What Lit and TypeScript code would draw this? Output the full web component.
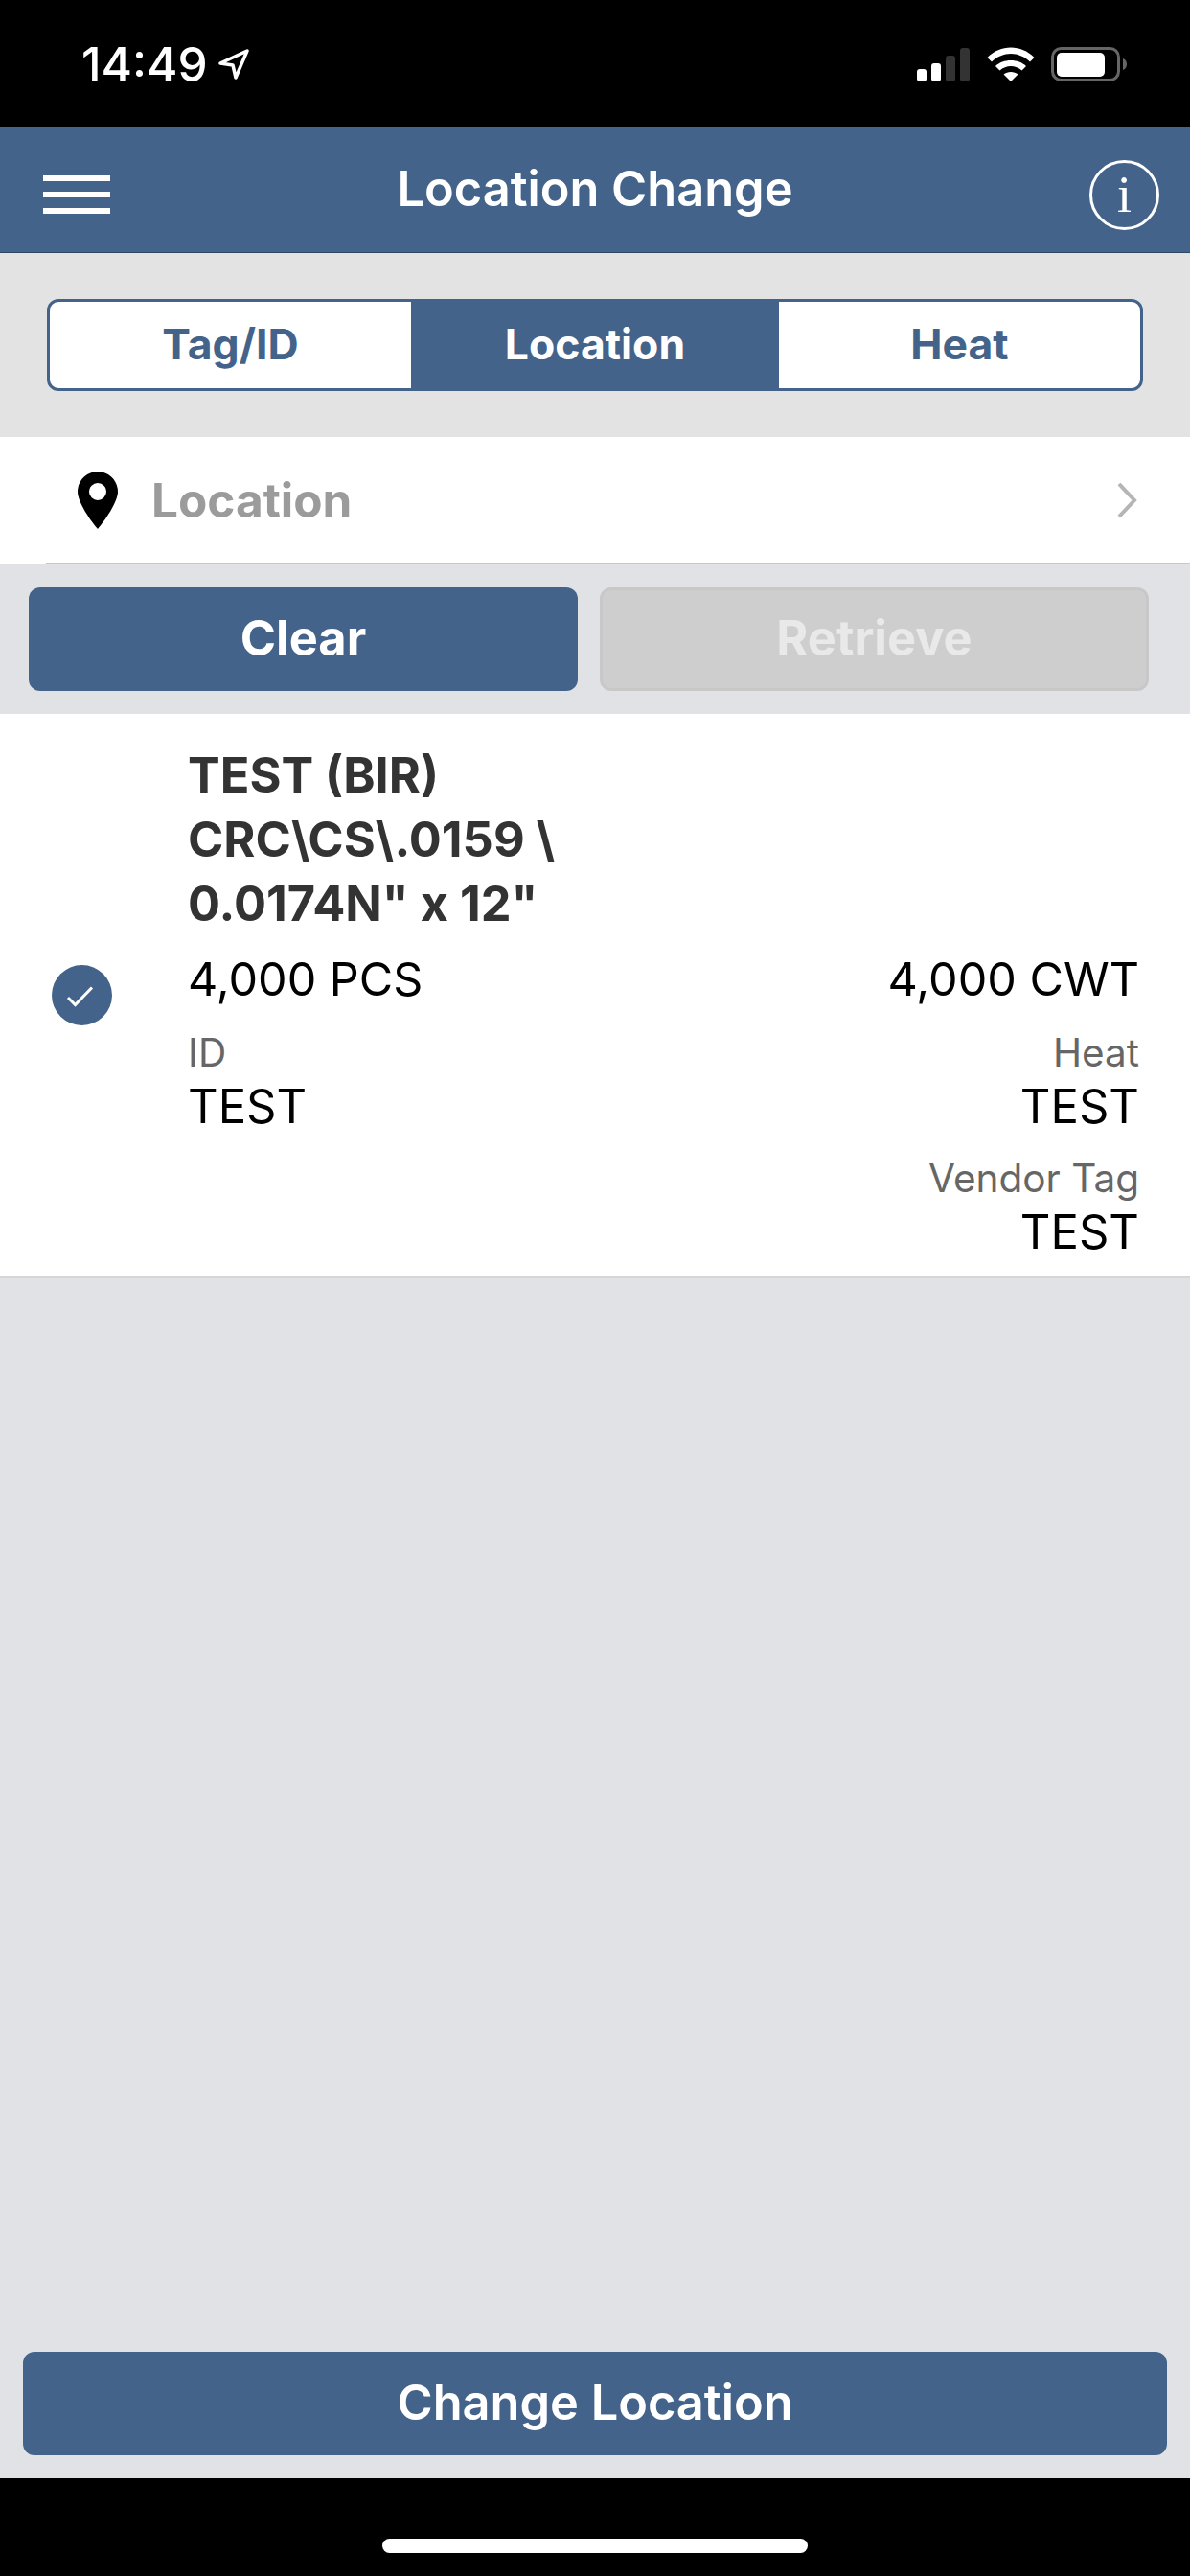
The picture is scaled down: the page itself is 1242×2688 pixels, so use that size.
import { LitElement, html, css } from 'lit';
import { customElement } from 'lit/decorators.js';

@customElement('app-root')
export class AppRoot extends LitElement {
  static styles = css`
    :host {
      display: flex;
      flex-direction: column;
      width: 1242px;
      height: 2688px;
      background: #e1e2e6;
      font-family: Inter, 'Liberation Sans', sans-serif;
      overflow: hidden;
    }

    /* status bar */
    .status {
      box-sizing: border-box;
      height: 132px;
      background: #000;
      color: #fff;
      padding: 49px 65px 0 85px;
      display: flex;
      align-items: flex-start;
      justify-content: space-between;
    }
    .clock {
      display: flex;
      align-items: flex-start;
      gap: 11px;
      font-size: 49.5px;
      font-weight: 500;
      line-height: 36px;
    }
    .clock svg {
      margin-top: 2px;
    }
    .indicators {
      display: flex;
      align-items: flex-start;
      gap: 17px;
    }

    /* header */
    .header {
      box-sizing: border-box;
      height: 132px;
      background: #44638a;
      border-bottom: 1px solid #2f4662;
      color: #fff;
      display: grid;
      grid-template-columns: 1fr auto 1fr;
      align-items: center;
      padding: 0 32px;
    }
    .title {
      font-size: 50.5px;
      font-weight: 600;
      line-height: 60px;
      margin-top: -2px;
    }
    .burger {
      display: flex;
      flex-direction: column;
      gap: 11px;
      width: 70px;
      margin: 11px 0 0 13px;
    }
    .burger span {
      height: 6px;
      background: #fff;
    }
    .info {
      justify-self: end;
      box-sizing: border-box;
      width: 73px;
      height: 73px;
      margin-top: 11px;
      border: 3px solid #fff;
      border-radius: 50%;
      display: flex;
      align-items: center;
      justify-content: center;
      font-family: 'Liberation Serif', serif;
      font-size: 54px;
      line-height: 1;
    }

    /* segmented control */
    .tabs-wrap {
      background: #e3e3e3;
      padding: 48px 49px;
    }
    .tabs {
      box-sizing: border-box;
      height: 96px;
      border: 3px solid #44638a;
      border-radius: 12px;
      overflow: hidden;
      display: grid;
      grid-template-columns: 1fr 384px 1fr;
      background: #fff;
    }
    .tab {
      display: flex;
      align-items: center;
      justify-content: center;
      color: #44638a;
      font-size: 44.5px;
      font-weight: 700;
      padding-bottom: 2px;
    }
    .tab.active {
      background: #44638a;
      color: #fff;
    }

    /* location row */
    .location-row {
      background: #fff;
    }
    .location-inner {
      box-sizing: border-box;
      height: 133px;
      margin-left: 48px;
      padding: 0 55px 0 33px;
      border-bottom: 2px solid #c8c8cc;
      display: flex;
      align-items: center;
      gap: 35px;
    }
    .location-label {
      flex: 1;
      color: #9b9b9b;
      font-size: 49.5px;
      font-weight: 700;
    }

    /* action buttons */
    .actions {
      display: grid;
      grid-template-columns: 573px 573px;
      gap: 23px;
      padding: 24px 43px 24px 30px;
    }
    .btn {
      box-sizing: border-box;
      height: 108px;
      border-radius: 12px;
      background: #44638a;
      color: #fff;
      font-size: 50.5px;
      font-weight: 700;
      padding-bottom: 3px;
      display: flex;
      align-items: center;
      justify-content: center;
    }
    .btn.disabled {
      background: #cecece;
      border: 3px solid #c8c8c8;
      color: #e9e9e9;
    }

    /* result card */
    .card {
      box-sizing: border-box;
      height: 589px;
      background: #fff;
      border-bottom: 2px solid #d6d6d6;
      display: flex;
      padding: 30px 53px 0 54px;
    }
    .check {
      flex: none;
      margin: 232px 79px 0 0;
    }
    .details {
      flex: 1;
    }
    .product {
      color: #333;
      font-size: 50.5px;
      font-weight: 700;
      line-height: 67px;
    }
    .grid {
      display: grid;
      grid-template-columns: 1fr 1fr;
      margin-top: 16px;
      row-gap: 25px;
    }
    .qty {
      color: #000;
      font-size: 48.5px;
      line-height: 60px;
    }
    .right {
      text-align: right;
    }
    .field-label {
      color: #666;
      font-size: 40.5px;
      line-height: 44px;
    }
    .field-value {
      color: #000;
      font-size: 49px;
      line-height: 56px;
      margin-top: 6px;
    }
    .spacer {
      flex: 1;
    }

    /* bottom */
    .footer {
      padding: 0 24px 24px;
    }
    .footer .btn {
      font-size: 50.5px;
      font-weight: 600;
    }
    .home {
      box-sizing: border-box;
      height: 102px;
      background: #000;
      padding-top: 63px;
      display: flex;
      justify-content: center;
    }
    .home span {
      width: 444px;
      height: 15px;
      border-radius: 8px;
      background: #fff;
    }
  `;

  render() {
    return html`
      <div class="status">
        <div class="clock">
          <span>14:49</span>
          <svg width="32" height="32" viewBox="0 0 32 32" fill="none" stroke="#fff" stroke-width="3.5" stroke-linejoin="round">
            <path d="M2 15 L30 2 L18 30 L15 17 Z" />
          </svg>
        </div>
        <div class="indicators">
          <svg width="56" height="36" viewBox="0 0 56 36">
            <rect x="0" y="23" width="10" height="13" rx="3" fill="#fff" />
            <rect x="15" y="17" width="10" height="19" rx="3" fill="#fff" />
            <rect x="30" y="9" width="10" height="27" rx="3" fill="#333" />
            <rect x="45" y="1" width="10" height="35" rx="3" fill="#333" />
          </svg>
          <svg width="50" height="36" viewBox="0 0 50 36" fill="#fff">
            <path d="M0.5 11 C14 -3 36 -3 49.5 11 L45 15.5 C33.5 4 16.5 4 5 15.5 Z" />
            <path d="M9 20 C17 12 33 12 41 20 L36.5 24.5 C30 18.5 20 18.5 13.5 24.5 Z" />
            <path d="M17.5 28.5 C21.5 25 28.5 25 32.500 28.5 L25 36 Z" />
          </svg>
          <svg width="80" height="36" viewBox="0 0 80 36">
            <rect x="1.500" y="1.500" width="69" height="33" rx="9" fill="none" stroke="#666" stroke-width="3" />
            <rect x="6" y="6" width="50" height="25" rx="5" fill="#fff" />
            <path d="M75 12 C78 13 79 15.500 79 18 C79 20.500 78 23 75 24 Z" fill="#666" />
          </svg>
        </div>
      </div>

      <div class="header">
        <div class="burger"><span></span><span></span><span></span></div>
        <div class="title">Location Change</div>
        <div class="info">i</div>
      </div>

      <div class="tabs-wrap">
        <div class="tabs">
          <div class="tab">Tag/ID</div>
          <div class="tab active">Location</div>
          <div class="tab">Heat</div>
        </div>
      </div>

      <div class="location-row">
        <div class="location-inner">
          <svg width="42" height="60" viewBox="0 0 42 60">
            <path fill-rule="evenodd" d="M21 0 C32.600 0 42 9.400 42 21 C42 32 28 52 21 60 C14 52 0 32 0 21 C0 9.400 9.400 0 21 0 Z M21 12 A9 9 0 1 0 21 30 A9 9 0 1 0 21 12 Z" fill="#000" />
          </svg>
          <div class="location-label">Location</div>
          <svg width="21" height="36" viewBox="0 0 21 36" fill="none" stroke="#b5b5b5" stroke-width="4">
            <path d="M2 1 L18 18 L2 35" />
          </svg>
        </div>
      </div>

      <div class="actions">
        <div class="btn">Clear</div>
        <div class="btn disabled">Retrieve</div>
      </div>

      <div class="card">
        <svg class="check" width="63" height="63" viewBox="0 0 63 63">
          <circle cx="31.500" cy="31.500" r="31.500" fill="#44638a" />
          <path d="M17 34 L24.500 41.500 L42 23.500" fill="none" stroke="#fff" stroke-width="3" />
        </svg>
        <div class="details">
          <div class="product">TEST (BIR)<br />CRC\\CS\\.0159 \\<br />0.0174N" x 12"</div>
          <div class="grid">
            <div class="qty">4,000 PCS</div>
            <div class="qty right">4,000 CWT</div>
            <div>
              <div class="field-label">ID</div>
              <div class="field-value">TEST</div>
            </div>
            <div class="right">
              <div class="field-label">Heat</div>
              <div class="field-value">TEST</div>
            </div>
            <div></div>
            <div class="right">
              <div class="field-label">Vendor Tag</div>
              <div class="field-value">TEST</div>
            </div>
          </div>
        </div>
      </div>

      <div class="spacer"></div>

      <div class="footer">
        <div class="btn">Change Location</div>
      </div>
      <div class="home"><span></span></div>
    `;
  }
}
